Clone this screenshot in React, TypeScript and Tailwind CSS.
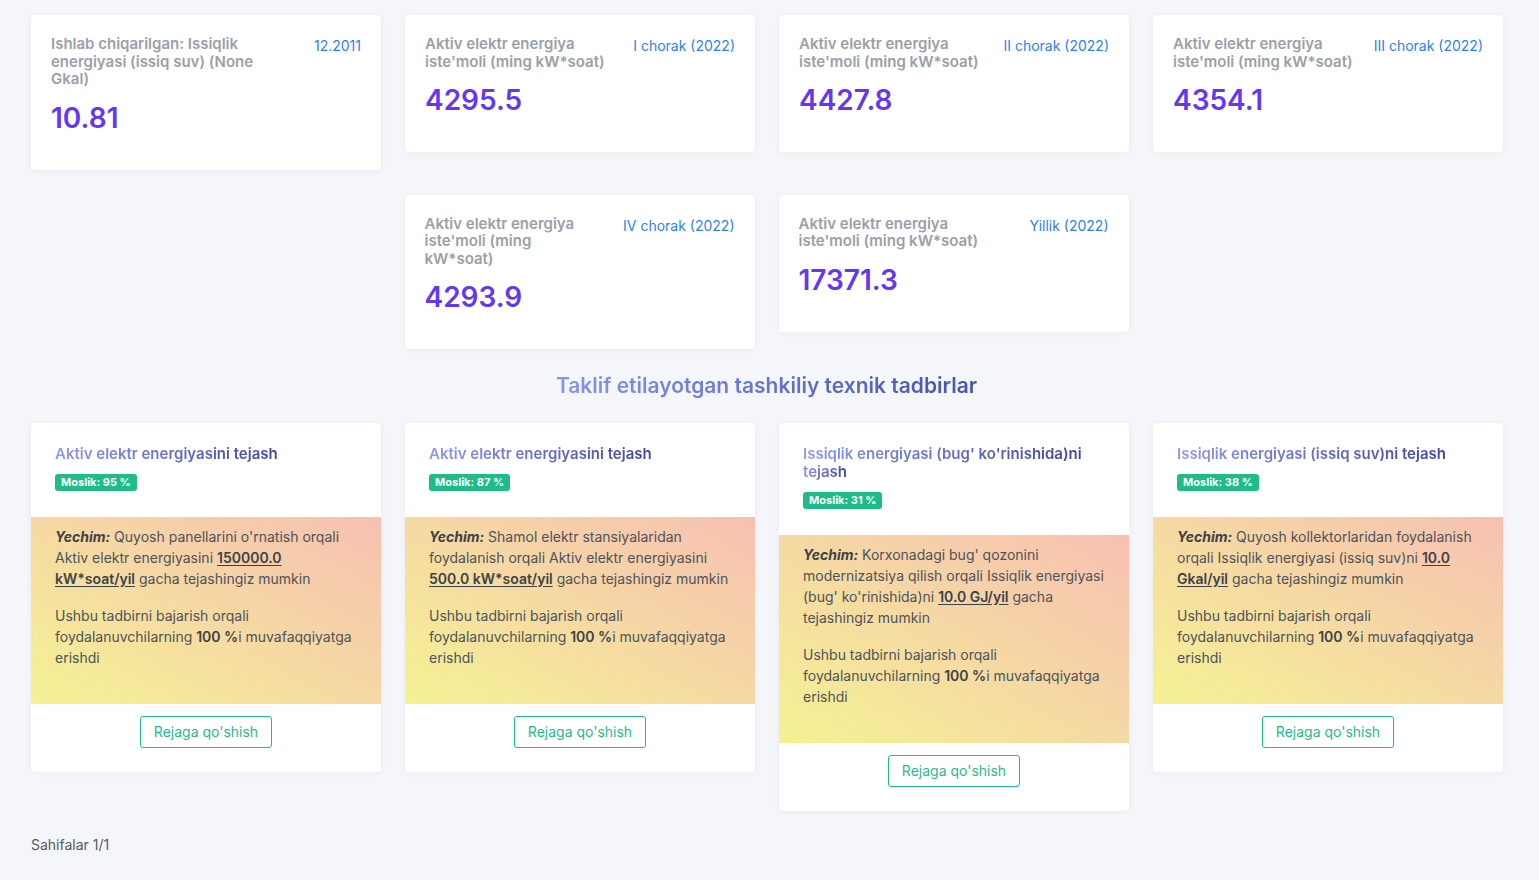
import React from 'react';

type Stat = { label: string; period: string; value: string };

const topRow: Stat[] = [
  { label: 'Ishlab chiqarilgan: Issiqlik energiyasi (issiq suv) (None Gkal)', period: '12.2011', value: '10.81' },
  { label: "Aktiv elektr energiya iste'moli (ming kW*soat)", period: 'I chorak (2022)', value: '4295.5' },
  { label: "Aktiv elektr energiya iste'moli (ming kW*soat)", period: 'II chorak (2022)', value: '4427.8' },
  { label: "Aktiv elektr energiya iste'moli (ming kW*soat)", period: 'III chorak (2022)', value: '4354.1' },
];

const secondRow: Stat[] = [
  { label: "Aktiv elektr energiya iste'moli (ming kW*soat)", period: 'IV chorak (2022)', value: '4293.9' },
  { label: "Aktiv elektr energiya iste'moli (ming kW*soat)", period: 'Yillik (2022)', value: '17371.3' },
];

type Measure = {
  title: string;
  match: number;
  before: string;
  amount: string;
  after: string;
};

const measures: Measure[] = [
  {
    title: 'Aktiv elektr energiyasini tejash',
    match: 95,
    before: "Quyosh panellarini o'rnatish orqali Aktiv elektr energiyasini",
    amount: '150000.0 kW*soat/yil',
    after: 'gacha tejashingiz mumkin',
  },
  {
    title: 'Aktiv elektr energiyasini tejash',
    match: 87,
    before: 'Shamol elektr stansiyalaridan foydalanish orqali Aktiv elektr energiyasini',
    amount: '500.0 kW*soat/yil',
    after: 'gacha tejashingiz mumkin',
  },
  {
    title: "Issiqlik energiyasi (bug' ko'rinishida)ni tejash",
    match: 31,
    before: "Korxonadagi bug' qozonini modernizatsiya qilish orqali Issiqlik energiyasi (bug' ko'rinishida)ni",
    amount: '10.0 GJ/yil',
    after: 'gacha tejashingiz mumkin',
  },
  {
    title: 'Issiqlik energiyasi (issiq suv)ni tejash',
    match: 38,
    before: 'Quyosh kollektorlaridan foydalanish orqali Issiqlik energiyasi (issiq suv)ni',
    amount: '10.0 Gkal/yil',
    after: 'gacha tejashingiz mumkin',
  },
];

const StatCard: React.FC<{ stat: Stat }> = ({ stat }) => (
  <div className="w-[350px] shrink-0 rounded-[4px] bg-white px-[20px] pt-[20px] pb-[35px] shadow-[0_1px_6px_rgba(30,40,90,0.05)]">
    <div className="flex items-start gap-[20px]">
      <div className="flex-1 text-[15px] leading-[17.5px] font-semibold text-[#9aa0a8]">{stat.label}</div>
      <div className="shrink-0 text-[14px] leading-[21px] text-[#2f7ff3]">{stat.period}</div>
    </div>
    <div className="mt-[13px] text-[28px] leading-[34px] font-semibold text-[#6537f4]">{stat.value}</div>
  </div>
);

const MeasureCard: React.FC<{ m: Measure }> = ({ m }) => (
  <div className="w-[350px] shrink-0 overflow-hidden rounded-[4px] bg-white shadow-[0_1px_6px_rgba(30,40,90,0.05)]">
    <div className="px-[24px] pt-[22px] pb-[26px]">
      <div className="text-[15px] leading-[18px]">
        <h3 className="inline bg-[linear-gradient(100deg,#8e9af0,#3b469f)] bg-clip-text font-semibold text-transparent [box-decoration-break:clone]">
          {m.title}
        </h3>
      </div>
      <div className="mt-[11px] flex">
        <span className="rounded-[3px] bg-[#1fbb89] px-[6px] text-[11px] leading-[17px] font-bold text-white">
          Moslik: {m.match} %
        </span>
      </div>
    </div>
    <div className="bg-[linear-gradient(to_top_right,#f4f294,#f7c0b2)] px-[24px] pt-[8.5px] pb-[20px] text-[14px] leading-[21px] text-[#4d535b]">
      <p className="mb-4">
        <b className="italic font-bold text-[#3d4248]">Yechim:</b> {m.before}{' '}
        <b className="font-semibold text-[#3d4248] underline underline-offset-2">{m.amount}</b> {m.after}
      </p>
      <p className="mb-4">
        Ushbu tadbirni bajarish orqali foydalanuvchilarning <b className="font-semibold text-[#3d4248]">100 %</b>i
        muvafaqqiyatga erishdi
      </p>
    </div>
    <div className="flex justify-center pt-[12px] pb-[24px]">
      <button className="h-[32px] rounded-[3px] border border-[#1fbb89] bg-white px-[13px] text-[14px] text-[#1fbb89]">
        Rejaga qo'shish
      </button>
    </div>
  </div>
);

const App: React.FC = () => {
  return (
    <div className="min-h-screen bg-[#f5f6fa] pt-[15px] pb-[24px] pr-[37px] pl-[31px] font-['Inter','Noto_Sans',sans-serif]">
      <div className="flex items-start gap-[24px]">
        {topRow.map((s, i) => (
          <StatCard key={i} stat={s} />
        ))}
      </div>

      <div className="mt-[25px] flex items-start justify-center gap-[24px]">
        {secondRow.map((s, i) => (
          <StatCard key={i} stat={s} />
        ))}
      </div>

      <div className="mt-[24px] text-center text-[21px] leading-[26px]">
        <h2 className="inline-block bg-[linear-gradient(90deg,#8795ee,#4452b2)] bg-clip-text font-semibold text-transparent">
          Taklif etilayotgan tashkiliy texnik tadbirlar
        </h2>
      </div>

      <div className="mt-[24px] flex items-start gap-[24px]">
        {measures.map((m, i) => (
          <MeasureCard key={i} m={m} />
        ))}
      </div>

      <div className="mt-[23px] text-[14px] leading-[21px] text-[#555a60]">Sahifalar 1/1</div>
    </div>
  );
};

export default App;
